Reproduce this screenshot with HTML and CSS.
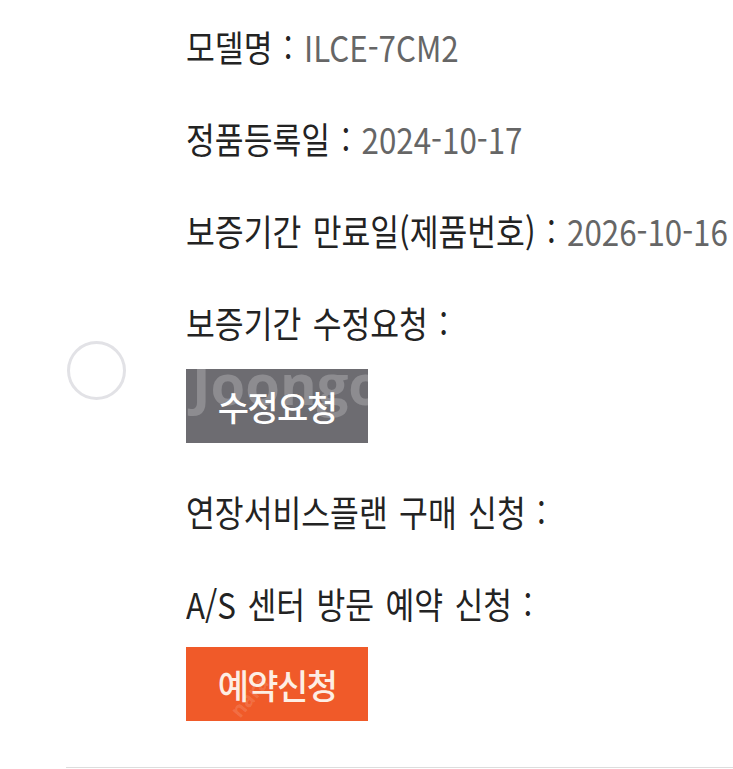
FILE: index.html
```html
<!DOCTYPE html>
<html lang="ko">
<head>
<meta charset="utf-8">
<link rel="stylesheet" href="styles.css">
</head>
<body>
<div class="page">
  <div class="dot"></div>
  <div class="info">
    <p class="row"><span class="line"><span class="label">모델명 : </span><span class="value">ILCE-7CM2</span></span></p>
    <p class="row"><span class="line"><span class="label">정품등록일 : </span><span class="value">2024-10-17</span></span></p>
    <p class="row"><span class="line"><span class="label">보증기간 만료일(제품번호) : </span><span class="value">2026-10-16</span></span></p>
    <p class="row row-btn"><span class="line"><span class="label">보증기간 수정요청 :</span></span></p>
    <div class="btn btn-gray"><span class="wm wm-gray">Joongo</span><span class="btn-text">수정요청</span></div>
    <p class="row"><span class="line"><span class="label">연장서비스플랜 구매 신청 :</span></span></p>
    <p class="row row-btn2"><span class="line"><span class="label">A/S 센터 방문 예약 신청 :</span></span></p>
    <div class="btn btn-orange"><span class="wm wm-orange">nara</span><span class="btn-text">예약신청</span></div>
  </div>
  <div class="rule"></div>
</div>
</body>
</html>
```

FILE: styles.css
```css
* { box-sizing: border-box; }
html, body {
  margin: 0;
  padding: 0;
  background: #ffffff;
  overflow: hidden;
}
body {
  font-family: "Noto Sans CJK KR", "Noto Sans", sans-serif;
  width: 733px;
  height: 769px;
}
.page {
  position: relative;
  width: 733px;
  height: 769px;
  padding-top: 23px;
  overflow: hidden;
}
.info {
  padding-left: 186px;
  display: flex;
  flex-direction: column;
  align-items: flex-start;
}
.row {
  margin: 0 0 46px 0;
  height: 46px;
  line-height: 46px;
  font-size: 36px;
  white-space: nowrap;
}
.line {
  display: inline-block;
  transform: scaleX(0.87);
  transform-origin: left center;
}
.row-btn { margin-bottom: 24px; }
.row-btn2 { margin-bottom: 21px; }
.label { color: #232323; letter-spacing: 0; word-spacing: 3px; }
.value { color: #666666; letter-spacing: 0; }
.btn {
  position: relative;
  overflow: hidden;
  width: 182px;
  height: 74px;
  display: flex;
  align-items: center;
  justify-content: center;
  font-size: 34px;
  font-weight: 500;
  letter-spacing: -1.6px;
}
.btn-gray {
  background: #6d6c71;
  color: #ffffff;
  margin-bottom: 45px;
}
.btn-orange {
  background: #f05a29;
  color: #fdeee4;
}
.btn-text { position: relative; }
.wm {
  position: absolute;
  font-family: "Open Sans", "Noto Sans", sans-serif;
  font-weight: 700;
  color: rgba(255, 255, 255, 0.22);
  letter-spacing: 0;
}
.wm-gray {
  left: 6px;
  top: -24px;
  font-size: 56px;
}
.wm-orange {
  left: 40px;
  top: 36px;
  font-size: 20px;
  transform: rotate(-50deg);
  color: rgba(255, 255, 255, 0.15);
}
.dot {
  position: absolute;
  left: 67px;
  top: 341px;
  width: 59px;
  height: 59px;
  border: 3px solid #e2e2e6;
  border-radius: 50%;
}
.rule {
  position: absolute;
  left: 66px;
  top: 767px;
  right: 0;
  height: 1px;
  background: #dddddd;
}
```
